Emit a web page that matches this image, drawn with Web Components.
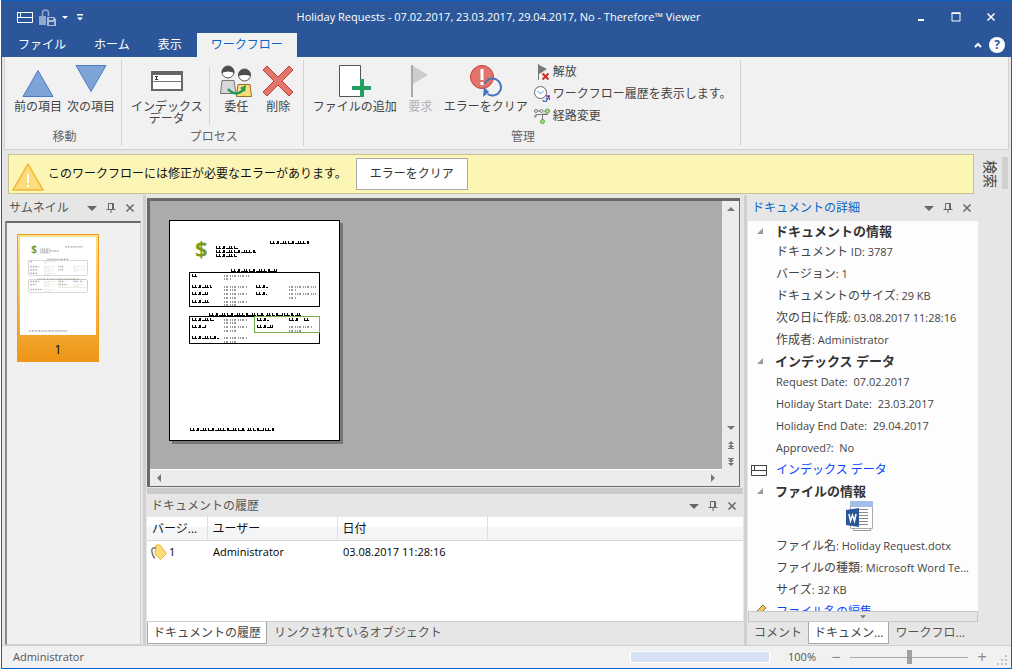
<!DOCTYPE html>
<html lang="ja">
<head>
<meta charset="utf-8">
<title>Therefore Viewer</title>
<style>
:root
{
    --blue: #2b579a;
    --frame: #0a64c8;
    --panel: #e6e6e6;
    --ribbon: #f1f1f1;
    --line: #cdcdcd;
    --text: #444;
    --latin: 11px;
}

body
{
    margin: 0;
    background: #fff;
    color: var(--text);
    font: 12px/16px "Open Sans", "Noto Sans CJK JP", sans-serif;
}
</style>
</head>
<body>
<viewer-app></viewer-app>

<script>
// every picture of the interface, by name: [viewBox, content]
const ICONS = {
    index: ['0 0 16 11', '<path d="M.5.5h15v10H.5zM.5 5.5h15M3.5.5v5" fill="none" stroke="currentColor"/><path d="M0 0h16v1H0z" fill="currentColor"/>'],
    lock: ['0 0 17 17', '<path d="M0 7h13v9H0z" fill="#8fa8ce"/><path d="M3.500 7V4a3 3 0 0 1 6 0v3" fill="none" stroke="#8fa8ce" stroke-width="1.500"/><path d="M7 7h10v10H7z" fill="#2b579a"/><path d="M8 8h7l2 2v7H8z" fill="#a9bbd9"/><path d="M10 9h4v2h-4zM10 13h5v3h-5z" fill="#2b579a"/>'],
    caret: ['0 0 6 3', '<path d="M0 0h6L3 3z" fill="currentColor"/>'],
    custom: ['0 0 7 7', '<path d="M0 0h6v1.500H0zM0 3.500h6L3 6.500z" fill="currentColor"/>'],
    min: ['0 0 10 10', '<path d="M2 7h6v2H2z" fill="currentColor"/>'],
    max: ['0 0 10 10', '<path d="M1 1h8v8H1z" fill="none" stroke="currentColor"/><path d="M.5.5h9v1.500h-9z" fill="currentColor"/>'],
    close: ['0 0 10 10', '<path d="M1.500 1.500l7 7m0-7l-7 7" stroke="currentColor" stroke-width="1.500"/>'],
    up: ['0 0 8 6', '<path d="M1 5l3-3 3 3" fill="none" stroke="currentColor" stroke-width="2"/>'],
    drop: ['0 0 10 10', '<path d="M0 3h10L5 8z" fill="currentColor"/>'],
    pin: ['0 0 10 10', '<path d="M2.500 6V.5h5V6M.5 6.500h9M5 7v3M6.500 1v5" fill="none" stroke="currentColor"/>'],
    prev: ['0 0 32 32', '<path d="M16 5.500L31 31.500H1z" fill="#7ea3d6" stroke="#4a7bc4"/>'],
    next: ['0 0 32 32', '<path d="M1 .5h30L16 26.500z" fill="#7ea3d6" stroke="#4a7bc4"/>'],
    form: ['0 0 32 32', '<path d="M1 7h30v18H1z" fill="#fff" stroke="#666" stroke-width="2"/><path d="M0 6h32v4H0z" fill="#666"/><path d="M1 16.500h30" stroke="#777"/><path d="M4 11.500h3M5.500 11v4M4 14.500h3" stroke="#333"/>'],
    people: ['0 0 32 32', '<path d="M2 15.500h12l2 13H.5z" fill="#d7d7d7" stroke="#777"/><circle cx="8" cy="7" r="6" fill="#fff" stroke="#555"/><path d="M1.500 8a6.500 7 0 0 1 13 0q-6-3-13 0z" fill="#4d4d4d"/><path d="M18 19.500h12l1.500 12H16.500z" fill="#fddd72" stroke="#8d7430"/><circle cx="24.500" cy="10" r="6" fill="#fff" stroke="#555"/><path d="M18 11a6.500 7 0 0 1 13 0q-6-2-13 0z" fill="#4d4d4d"/><path d="M8 24q8 9 16 0" fill="none" stroke="#1c9a55" stroke-width="2.500"/><path d="M20 23l6-3-1 7z" fill="#1c9a55"/>'],
    remove: ['0 0 32 32', '<path d="M5 1l11 11L27 1l4 4-11 11 11 11-4 4-11-11L5 31l-4-4 11-11L1 5z" fill="#e2756b" stroke="#c93d34" stroke-linejoin="round"/>'],
    addfile: ['0 0 32 32', '<path d="M.5.5h21v31H.5z" fill="#fff" stroke="#555"/><path d="M21 14h4v7h7v4h-7v7h-4v-7h-8v-4h8z" fill="#1fa05c"/>'],
    flag: ['0 0 32 32', '<path d="M7 0h2v32H7z" fill="#a9a9a9"/><path d="M9 1l15 9-15 9z" fill="#ccc"/>'],
    error: ['0 0 32 32', '<circle cx="12" cy="12" r="11.500" fill="#e2756b" stroke="#c93d34"/><path d="M10.500 4h3v11h-3zM10.500 17h3v3h-3z" fill="#fff"/><path d="M14.500 19a8.500 8.500 0 1 1 3 10" fill="none" stroke="#4474c0" stroke-width="2"/><path d="M14 22l5 5-6 5z" fill="#4474c0"/>'],
    release: ['0 0 16 16', '<path d="M4 0h1v16H4z" fill="#777"/><path d="M5 1l8 4-8 5z" fill="#777"/><path d="M8.500 9.500l6 6m0-6l-6 6" stroke="#cc2f25" stroke-width="2"/>'],
    clock: ['0 0 16 16', '<circle cx="6.500" cy="6.500" r="6" fill="#fff" stroke="#666"/><path d="M3.500 5l3 3 3-3" fill="none" stroke="#5a8fd0"/><path d="M9 14a2 2 0 1 0 3-2l2 1" fill="none" stroke="#4474c0" stroke-width="1.500"/><path d="M12 10h4M14 10l2 4" stroke="#76379c" stroke-width="1.500"/>'],
    route: ['0 0 16 16', '<path d="M2 6.500h12M8.500 7v5" stroke="#777"/><g fill="#f1f1f1" stroke="#777"><circle cx="2" cy="3" r="1.500"/><circle cx="7.500" cy="3" r="1.500"/></g><g fill="#a8dd7a" stroke="#58a637"><circle cx="13.500" cy="3" r="2"/><circle cx="8.500" cy="13.500" r="2"/></g><path d="M2 6v3m-1-2v3M4 3h2m4 0h1m-2 3h4" stroke="#777"/>'],
    warn: ['0 0 32 28', '<path d="M16 1L31 27H1z" fill="#fddc7c" stroke="#f2b530" stroke-width="1.500"/><path d="M15 11h2v9h-2zM15 22h2v2h-2z" fill="#fff"/>'],
    tag: ['0 0 16 16', '<path d="M5 1h4l6.500 8.500-6 6L4 10z" fill="#ffdc7a" stroke="#e7b53c"/><path d="M5 4Q0 3 1 8t3 6" fill="none" stroke="#777" stroke-width="1.500"/>'],
    twist: ['0 0 6 6', '<path d="M6 0v6H0z" fill="#999"/>'],
    word: ['0 0 28 30', '<path d="M7.500 3.500h17v26h-17z" fill="#fff" stroke="#999"/><path d="M4.500.5h22v27h-22z" fill="#fff" stroke="#aaa"/><path d="M4 0h23v6H4z" fill="#a3bfe7"/><path d="M13 8.500h9M13 11.500h9M13 14.500h9M13 17.500h9M13 20.500h9M13 23.500h9" stroke="#888"/><path d="M0 9l13-2v19L0 24z" fill="#2a5699"/><path d="M3 13l1.500 7 2-6 2 6L10 13" fill="none" stroke="#fff" stroke-width="1.500"/>'],
    pencil: ['0 0 16 16', '<path d="M12 1l3 3L5 14l-4 1 1-4z" fill="#fbc45d" stroke="#8a7550"/>'],
    tri: ['0 0 8 8', '<path d="M0 6h8L4 2z" fill="currentColor"/>'],
    double: ['0 0 8 8', '<path d="M1 3h6L4 0zM3 3h2v1H3zM1 6h6L4 3zM3 6h2v1H3zM1 7h6v1H1z" fill="currentColor"/>'],
    grip: ['0 0 10 10', '<path d="M8 0h2v2H8zM4 4h2v2H4zM8 4h2v2H8zM0 8h2v2H0zM4 8h2v2H4zM8 8h2v2H8z" fill="#c2c2c2"/>']
}

function define(name, html)
{
    const temp = document.createElement('template')
    temp.innerHTML = html

    window.customElements.define(name, class extends HTMLElement
    {
        constructor()
        {
            super()
            this.attachShadow({mode:'open'})
            this.shadowRoot.appendChild(temp.content.cloneNode(true))
        }

        connectedCallback()
        {
            // [data-text="x"] shows attribute x of the host
            this.shadowRoot.querySelectorAll('[data-text]').forEach(el =>
            {
                el.textContent = this.getAttribute(el.dataset.text)
            })
            this.shadowRoot.querySelectorAll('[data-icon]').forEach(el =>
            {
                el.setAttribute('name', this.getAttribute('icon'))
            })
        }
    })
}


class UiIcon extends HTMLElement
{
    static observedAttributes = ['name']

    constructor()
    {
        super()
        this.attachShadow({mode:'open'})
    }

    attributeChangedCallback()
    {
        const icon = ICONS[this.getAttribute('name')]
        if (!icon) return
        this.shadowRoot.innerHTML =
        `
        <style>
        :host { display: block; flex: none; width: 10px; height: 10px; }
        svg { display: block; width: 100%; height: 100%; }
        </style>
        <svg viewBox="${icon[0]}" aria-hidden="true">${icon[1]}</svg>
        `
    }
}

window.customElements.define('ui-icon', UiIcon)


// the scanned form, used large in the viewer and small as a thumbnail
const DARK_LINES = [
    [100, 22, 39], [46, 27, 22], [46, 31, 40], [46, 35, 21], [61, 50, 46],
    [22, 55, 6], [22, 66, 20], [22, 73, 16], [22, 81, 18], [86, 66, 12], [86, 73, 11],
    [39, 94, 92], [22, 99, 22], [22, 106, 14], [22, 117, 27],
    [87, 99, 12], [87, 106, 16], [119, 99, 9], [134, 99, 6], [20, 209, 84]
]
const PALE_LINES = [
    [54, 55, 26], [54, 58, 8], [54, 66, 23], [54, 69, 14], [54, 73, 23], [54, 77, 14], [54, 81, 23], [54, 84, 14],
    [119, 66, 27], [119, 69, 8], [119, 73, 27], [119, 77, 8],
    [54, 99, 23], [54, 102, 14], [54, 106, 23], [54, 110, 14], [54, 117, 23], [54, 121, 14],
    [119, 106, 23], [119, 110, 13]
]

const toPath = lines => lines.map(l => `M${l[0]} ${l[1]}h${l[2]}`).join('')

define('form-page',
`
<style>
:host { display: block; background: #fff; }
svg { display: block; width: 100%; height: auto; }
.dark { stroke: #000; stroke-width: 1; stroke-dasharray: 5 1 3 1 7 2; }
.spike { stroke: #000; stroke-width: 3; stroke-dasharray: 1 2 1 3 2 4 1 1; }
.pale { stroke: #999; stroke-width: 2; stroke-dasharray: 1 1 2 2 1 1; }
.box { fill: none; stroke: var(--box, #000); shape-rendering: crispEdges; }
.lines { opacity: var(--ink, 1); }
.green { fill: none; stroke: #70ad47; shape-rendering: crispEdges; opacity: var(--ink, 1); }
text { font: bold 22px "Open Sans", sans-serif; fill: #7a9a1c; }
</style>
<svg viewBox="0 0 169 219" role="img" aria-label="Holiday Request">
    <text x="25" y="36">$</text>
    <g class="lines">
        <path class="dark" transform="translate(0 .5)" d="${toPath(DARK_LINES)}"/>
        <path class="spike" transform="translate(0 -.5)" d="${toPath(DARK_LINES)}"/>
        <path class="pale" d="${toPath(PALE_LINES)}"/>
    </g>
    <path class="box" d="M19.500 51.500h130v34h-130zM19.500 95.500h130v27h-130z"/>
    <path class="green" d="M84.500 95.500h65v16h-65z"/>
</svg>
`)


define('ribbon-button',
`
<style>
:host { display: block; }
button
{
    display: flex;
    flex-direction: column;
    align-items: center;
    gap: 4px;
    min-width: 41px;
    padding: 0 2px;
    border: none;
    background: none;
    color: inherit;
    font: inherit;
    line-height: 12px;
}
span { white-space: pre-line; }
ui-icon { width: 32px; height: 32px; }
:host([small]) button { flex-direction: row; gap: 3px; padding: 0; line-height: 22px; }
:host([small]) ui-icon { width: 16px; height: 16px; }
:host([off]) { color: #b1b1b1; }
</style>
<button type="button"><ui-icon data-icon></ui-icon><span><slot></slot></span></button>
`)


define('ribbon-group',
`
<style>
:host
{
    display: flex;
    flex-direction: column;
    justify-content: space-between;
    margin: 3px 0;
    padding: 5px 4px 0 7px;
    border-right: 1px solid #d2d2d2;
}
.row { display: flex; gap: 1px; height: 66px; }
small { color: #666; font-size: 12px; line-height: 18px; text-align: center; }
</style>
<div class="row"><slot></slot></div>
<small data-text="label"></small>
`)


define('dock-panel',
`
<style>
:host { display: flex; flex-direction: column; min-height: 0; }
header
{
    display: flex;
    flex: none;
    align-items: center;
    gap: 1px;
    height: var(--head, 26px);
    padding: 0 2px 0 4px;
}
h2 { flex: 1; margin: 0; font-size: 12px; font-weight: normal; color: var(--head-color, #555); }
button
{
    display: flex;
    justify-content: center;
    width: 18px;
    padding: 4px 0;
    border: none;
    background: none;
    color: #666;
}
</style>
<header>
    <h2 data-text="label"></h2>
    <button type="button" aria-label="メニュー"><ui-icon name="drop"></ui-icon></button>
    <button type="button" aria-label="固定"><ui-icon name="pin"></ui-icon></button>
    <button type="button" aria-label="閉じる"><ui-icon name="close"></ui-icon></button>
</header>
<slot></slot>
`)


define('panel-tab',
`
<style>
:host { display: block; flex: none; }
button
{
    height: 22px;
    padding: 0 5px;
    border: 1px solid transparent;
    border-top: none;
    background: none;
    color: #555;
    font: inherit;
    white-space: nowrap;
}
:host([active]) button { background: #fff; border-color: #a8a8a8; color: #444; }
</style>
<button type="button"><slot></slot></button>
`)


define('detail-head',
`
<style>
:host { display: flex; align-items: center; gap: 12px; height: 20px; padding-left: 9px; }
ui-icon { width: 6px; height: 6px; }
h3 { margin: 0; color: #333; font-size: 13px; line-height: 20px; }
</style>
<ui-icon name="twist"></ui-icon><h3><slot></slot></h3>
`)


define('detail-row',
`
<style>
:host { display: block; height: 22px; padding-left: 28px; }
p { margin: 0; font-size: var(--latin); line-height: 22px; white-space: pre; }
span { font-size: 12px; }
</style>
<p><span data-text="label"></span><slot></slot></p>
`)


define('detail-link',
`
<style>
:host { display: flex; align-items: center; gap: 9px; height: 22px; padding-left: 3px; }
ui-icon { width: 16px; height: var(--icon-height, 11px); }
a { color: #0a46ff; line-height: 22px; text-decoration: none; }
</style>
<ui-icon data-icon></ui-icon><a href="#"><slot></slot></a>
`)


define('title-bar',
`
<style>
:host { display: block; background: var(--blue); color: #fff; }
.top { display: grid; grid-template-columns: 1fr auto 1fr; align-items: center; height: 32px; }
.quick { display: flex; align-items: center; gap: 6px; padding-left: 15px; }
.quick ui-icon:nth-child(1) { width: 16px; height: 11px; }
.quick ui-icon:nth-child(2) { width: 17px; height: 17px; }
.quick ui-icon:nth-child(3) { width: 6px; height: 3px; }
.quick ui-icon:nth-child(4) { width: 7px; height: 7px; margin-left: 3px; }
h1 { margin: 0; padding-right: 16px; font-size: var(--latin); font-weight: normal; }
button { border: none; background: none; color: inherit; font: inherit; }
.win { display: flex; justify-content: flex-end; gap: 25px; padding-right: 15px; }
.win button { padding: 0; }
nav { display: flex; align-items: center; height: 24px; padding-left: 2px; }
nav button { height: 24px; padding: 0 14px; }
nav button.active { margin-left: 1px; background: var(--ribbon); color: #0a64c8; }
.help { display: flex; align-items: center; gap: 7px; margin-left: auto; padding-right: 6px; }
.help ui-icon { width: 8px; height: 6px; }
.help button
{
    width: 16px;
    height: 16px;
    padding: 0;
    border-radius: 50%;
    background: #fff;
    color: var(--blue);
    font-weight: bold;
    line-height: 16px;
}
</style>
<div class="top">
    <div class="quick">
        <ui-icon name="index"></ui-icon>
        <ui-icon name="lock"></ui-icon>
        <ui-icon name="caret"></ui-icon>
        <ui-icon name="custom"></ui-icon>
    </div>
    <h1><slot></slot></h1>
    <div class="win">
        <button type="button" aria-label="最小化"><ui-icon name="min"></ui-icon></button>
        <button type="button" aria-label="最大化"><ui-icon name="max"></ui-icon></button>
        <button type="button" aria-label="閉じる"><ui-icon name="close"></ui-icon></button>
    </div>
</div>
<nav>
    <button type="button">ファイル</button>
    <button type="button">ホーム</button>
    <button type="button">表示</button>
    <button type="button" class="active">ワークフロー</button>
    <div class="help"><ui-icon name="up"></ui-icon><button type="button">?</button></div>
</nav>
`)


define('error-banner',
`
<style>
:host
{
    display: flex;
    align-items: center;
    gap: 4px;
    height: 38px;
    margin: 4px 4px 1px 6px;
    padding-left: 3px;
    border: 1px solid #c9c28f;
    background: #fcf6b6;
    color: #111;
}
ui-icon { width: 32px; height: 28px; margin-top: 6px; }
button
{
    height: 32px;
    margin-left: 5px;
    padding: 0 13px;
    border: 1px solid #ababab;
    background: #fff;
    color: #333;
    font: inherit;
}
</style>
<ui-icon name="warn"></ui-icon>
<span><slot></slot></span>
<button type="button">エラーをクリア</button>
`)


define('thumb-list',
`
<style>
:host
{
    display: block;
    flex: 1;
    border: 1px solid #d0d0d0;
    border-top: 2px solid #696969;
    border-left: 2px solid #8a8a8a;
    background: #f0f0f0;
}
figure
{
    width: 76px;
    margin: 11px 0 0 10px;
    padding: 2px;
    border: 1px solid #ee9a1e;
    background: linear-gradient(#ffe28a, #ee9516);
    box-sizing: content-box;
}
form-page { --ink: .4; --box: #aaa; }
figcaption { padding-top: 6px; color: #000; line-height: 18px; text-align: center; }
</style>
<figure><form-page></form-page><figcaption>1</figcaption></figure>
`)


define('page-view',
`
<style>
:host
{
    display: grid;
    flex: 1;
    grid-template-columns: 1fr 17px;
    grid-template-rows: 1fr 17px;
    min-height: 0;
    margin: 3px 3px 0 0;
    border: 1px solid #696969;
    border-width: 3px 1px 1px 3px;
}
.sheet { padding: 19px; background: #ababab; overflow: hidden; }
form-page { width: 169px; border: 1px solid #000; box-shadow: 3px 3px #777; }
.bar { display: flex; justify-content: space-between; align-items: center; background: #ececec; color: #777; }
.bar ui-icon { width: 8px; height: 8px; }
.v { flex-direction: column; grid-area: 1 / 2 / 3 / 3; gap: 9px; padding: 4px 0 20px; }
.v ui-icon:nth-child(2) { margin-top: auto; }
.h { grid-area: 2 / 1 / 3 / 2; padding: 0 5px; border-top: 1px solid #fff; }
.down { transform: rotate(180deg); }
.left { transform: rotate(-90deg); }
.right { transform: rotate(90deg); }
</style>
<div class="sheet"><form-page></form-page></div>
<div class="bar v">
    <ui-icon name="tri"></ui-icon>
    <ui-icon name="tri" class="down"></ui-icon>
    <ui-icon name="double"></ui-icon>
    <ui-icon name="double" class="down"></ui-icon>
</div>
<div class="bar h"><ui-icon name="tri" class="left"></ui-icon><ui-icon name="tri" class="right"></ui-icon></div>
`)


define('history-table',
`
<style>
:host { display: block; flex: 1; background: #fff; border-bottom: 1px solid var(--line); }
table { width: 100%; border-collapse: collapse; table-layout: fixed; color: #111; }
th
{
    height: 23px;
    padding: 0 5px;
    border-right: 1px solid #dedfe1;
    border-bottom: 1px solid #d5d5d5;
    background: linear-gradient(#fff 40%, #f3f5f7 45%);
    font-weight: normal;
    text-align: left;
    white-space: nowrap;
}
th:last-child { border-right: none; }
td { height: 21px; padding: 0 6px; color: #000; font-size: var(--latin); }
td:first-child { padding-left: 4px; }
div { display: flex; align-items: center; gap: 2px; }
ui-icon { width: 16px; height: 16px; }
</style>
<table>
    <colgroup><col style="width: 60px"><col style="width: 130px"><col style="width: 150px"><col></colgroup>
    <thead><tr><th>バージ...</th><th>ユーザー</th><th>日付</th><th></th></tr></thead>
    <tbody><tr><td><div><ui-icon name="tag"></ui-icon>1</div></td><td>Administrator</td><td>03.08.2017 11:28:16</td><td></td></tr></tbody>
</table>
`)


define('status-bar',
`
<style>
:host
{
    display: flex;
    flex: none;
    align-items: center;
    height: 22px;
    padding: 0 4px 0 11px;
    border-top: 1px solid var(--line);
    background: var(--ribbon);
    color: #555;
    font-size: var(--latin);
}
.user { flex: 1; }
.progress { width: 138px; height: 10px; margin-right: 18px; border: 1px solid #fff; background: #d6e2f3; }
button
{
    width: 16px;
    padding: 0;
    border: none;
    background: none;
    color: #888;
    font: 16px/16px "Open Sans", sans-serif;
}
input
{
    width: 118px;
    height: 16px;
    margin: 0 6px;
    appearance: none;
    background: linear-gradient(#a8a8a8, #a8a8a8) center / 100% 1px no-repeat;
}
input::-webkit-slider-thumb { width: 5px; height: 14px; appearance: none; background: #a0a0a0; }
label { margin-right: 12px; }
ui-icon { margin: 6px 0 0 7px; }
</style>
<span class="user">Administrator</span>
<div class="progress"></div>
<label for="zoom">100%</label>
<button type="button" aria-label="縮小">−</button>
<input id="zoom" type="range" min="0" max="200" value="100">
<button type="button" aria-label="拡大">+</button>
<ui-icon name="grip"></ui-icon>
`)


define('viewer-app',
`
<style>
:host { display: block; height: 100vh; padding: 0 1px 1px; box-sizing: border-box; }
main
{
    display: flex;
    flex-direction: column;
    height: 100%;
    border: 1px solid var(--frame);
    box-sizing: border-box;
    background: var(--panel);
}
.ribbon
{
    display: flex;
    height: 92px;
    margin: 0 2px;
    border: 1px solid #d2d2d2;
    border-top: none;
    background: var(--ribbon);
}
.sep { width: 1px; height: 58px; margin: 2px 5px 0 3px; background: #d2d2d2; }
.small { margin: -4px 4px 0 3px; }
.desk { display: flex; flex: 1; min-height: 0; }
.left { display: flex; flex: 1; flex-direction: column; min-width: 0; }
.work { display: flex; flex: 1; gap: 1px; min-height: 0; padding-left: 3px; }
.split { flex: none; width: 3px; background: #d0d0d0; }
.cross { flex: none; height: 6px; margin-top: 1px; background: #cbcbcb; }
.thumbs { width: 136px; margin-right: 1px; }
.center { display: flex; flex: 1; flex-direction: column; min-width: 0; }
.history { --head: 23px; height: 151px; }
.tabs { display: flex; flex: none; height: 23px; }
.history .tabs panel-tab { margin-right: 1px; }
.details { --head-color: #0a64c8; width: 230px; }
.info { flex: 1; min-height: 0; overflow: hidden; background: #fdfdfd; }
.word { display: flex; justify-content: center; padding: 0 6px 4px 0; }
.word ui-icon { width: 28px; height: 30px; }
.more
{
    display: flex;
    justify-content: center;
    flex: none;
    height: 11px;
    padding: 0;
    border: 1px solid #c8c8c8;
    background: var(--panel);
    color: #777;
}
.more ui-icon { width: 6px; height: 9px; }
.side { display: flex; gap: 4px; width: 33px; padding-top: 7px; align-items: flex-start; }
.side button
{
    padding: 3px 0 0 4px;
    border: none;
    background: none;
    color: #444;
    font: inherit;
    font-size: 14px;
    writing-mode: vertical-rl;
    text-orientation: sideways;
}
.side i { width: 6px; height: 32px; background: #d0d0d0; }
</style>
<main>
    <title-bar>Holiday Requests - 07.02.2017, 23.03.2017, 29.04.2017, No - Therefore™ Viewer</title-bar>
    <div class="ribbon">
        <ribbon-group label="移動">
            <ribbon-button icon="prev">前の項目</ribbon-button>
            <ribbon-button icon="next">次の項目</ribbon-button>
        </ribbon-group>
        <ribbon-group label="プロセス">
            <ribbon-button icon="form">インデックス
データ</ribbon-button>
            <div class="sep"></div>
            <ribbon-button icon="people">委任</ribbon-button>
            <ribbon-button icon="remove">削除</ribbon-button>
        </ribbon-group>
        <ribbon-group label="管理">
            <ribbon-button icon="addfile">ファイルの追加</ribbon-button>
            <ribbon-button icon="flag" off>要求</ribbon-button>
            <ribbon-button icon="error">エラーをクリア</ribbon-button>
            <div class="small">
                <ribbon-button small icon="release">解放</ribbon-button>
                <ribbon-button small icon="clock">ワークフロー履歴を表示します。</ribbon-button>
                <ribbon-button small icon="route">経路変更</ribbon-button>
            </div>
        </ribbon-group>
    </div>
    <div class="desk">
        <div class="left">
            <error-banner>このワークフローには修正が必要なエラーがあります。</error-banner>
            <div class="work">
                <dock-panel class="thumbs" label="サムネイル"><thumb-list></thumb-list></dock-panel>
                <div class="split"></div>
                <div class="center">
                    <page-view></page-view>
                    <div class="cross"></div>
                    <dock-panel class="history" label="ドキュメントの履歴">
                        <history-table></history-table>
                        <div class="tabs">
                            <panel-tab active>ドキュメントの履歴</panel-tab>
                            <panel-tab>リンクされているオブジェクト</panel-tab>
                        </div>
                    </dock-panel>
                </div>
                <div class="split"></div>
                <dock-panel class="details" label="ドキュメントの詳細">
                    <div class="info">
                        <detail-head>ドキュメントの情報</detail-head>
                        <detail-row label="ドキュメント"> ID: 3787</detail-row>
                        <detail-row label="バージョン">: 1</detail-row>
                        <detail-row label="ドキュメントのサイズ">: 29 KB</detail-row>
                        <detail-row label="次の日に作成">: 03.08.2017 11:28:16</detail-row>
                        <detail-row label="作成者">: Administrator</detail-row>
                        <detail-head>インデックス データ</detail-head>
                        <detail-row>Request Date:  07.02.2017</detail-row>
                        <detail-row>Holiday Start Date:  23.03.2017</detail-row>
                        <detail-row>Holiday End Date:  29.04.2017</detail-row>
                        <detail-row>Approved?:  No</detail-row>
                        <detail-link icon="index">インデックス データ</detail-link>
                        <detail-head>ファイルの情報</detail-head>
                        <div class="word"><ui-icon name="word"></ui-icon></div>
                        <detail-row label="ファイル名">: Holiday Request.dotx</detail-row>
                        <detail-row label="ファイルの種類">: Microsoft Word Te...</detail-row>
                        <detail-row label="サイズ">: 32 KB</detail-row>
                        <detail-link icon="pencil" style="--icon-height: 16px">ファイル名の編集</detail-link>
                    </div>
                    <button type="button" class="more" aria-label="下へ"><ui-icon name="drop"></ui-icon></button>
                    <div class="tabs">
                        <panel-tab>コメント</panel-tab>
                        <panel-tab active>ドキュメン...</panel-tab>
                        <panel-tab>ワークフロ...</panel-tab>
                    </div>
                </dock-panel>
            </div>
        </div>
        <div class="side"><button type="button">検索</button><i></i></div>
    </div>
    <status-bar></status-bar>
</main>
`)
</script>
</body>
</html>
